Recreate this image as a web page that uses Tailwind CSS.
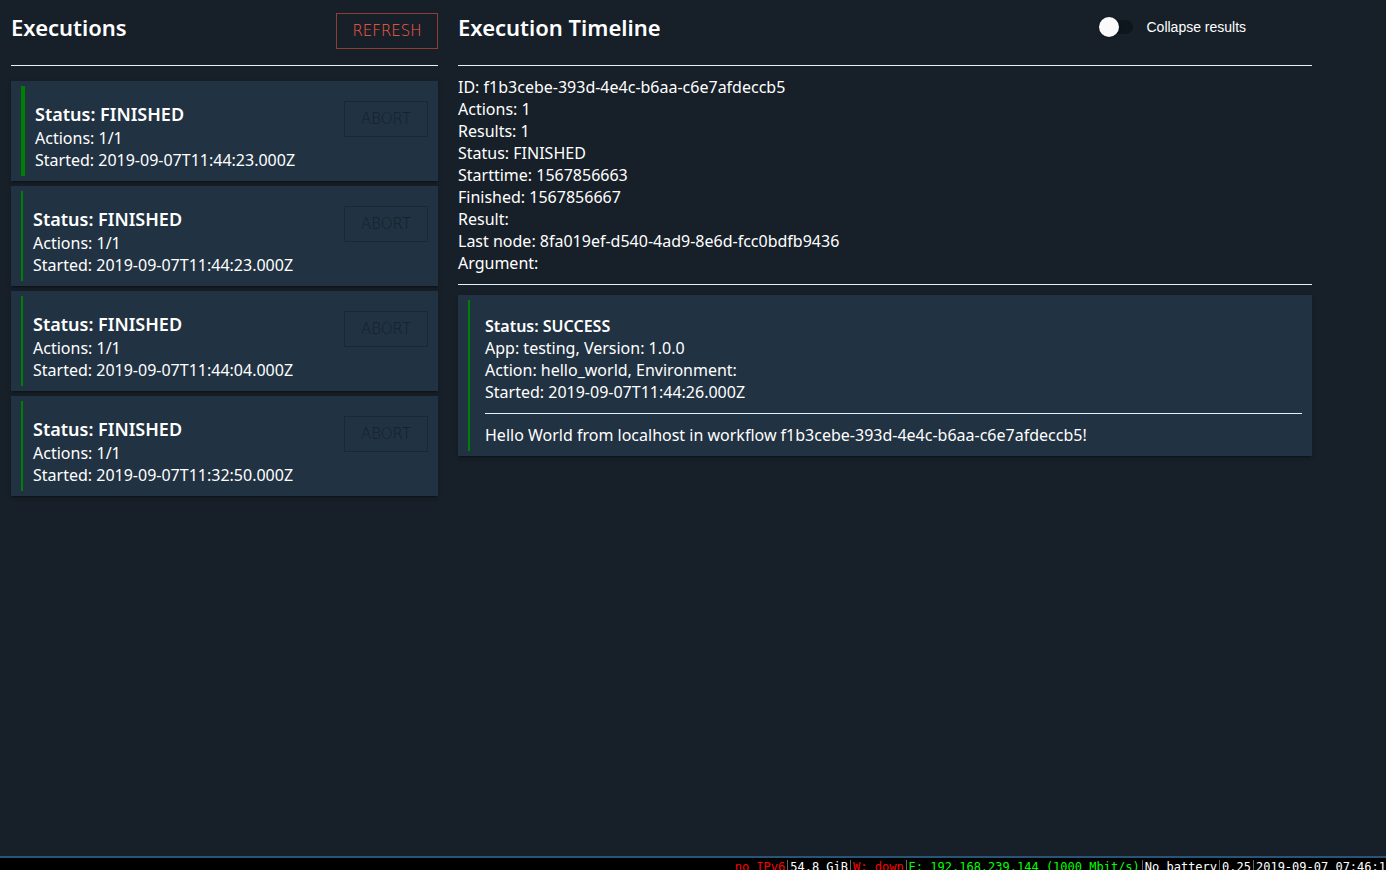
<!DOCTYPE html>
<html lang="en">
<head>
<meta charset="utf-8">
<meta name="viewport" content="width=device-width, initial-scale=1">
<title>Executions</title>
<script src="https://cdn.jsdelivr.net/npm/@tailwindcss/browser@4"></script>
</head>
<body class="flex h-screen flex-col overflow-hidden bg-[#172029] font-['Noto_Sans',sans-serif] text-base leading-[22px] text-white">
<main class="grid min-h-0 flex-1 grid-cols-[1fr_2fr] content-start gap-5 overflow-hidden pr-[74px] pl-[11px]">
  <section>
    <header class="flex items-start justify-between border-b border-[#e4f1fa] pt-[13px] pb-4">
      <h1 class="text-[22px] leading-7 font-semibold">Executions</h1>
      <button type="button" class="h-9 w-[102px] border border-[#903d35] font-['DejaVu_Sans',sans-serif] text-[15px] font-extralight text-[#ff5f45]">REFRESH</button>
    </header>
    <ul class="mt-[15px] flex flex-col gap-[5px]">
      <li class="bg-[#213242] px-2.5 py-[5px] shadow-[0_3px_1px_-2px_rgba(0,0,0,0.2),0_2px_2px_0_rgba(0,0,0,0.14),0_1px_5px_0_rgba(0,0,0,0.12)]">
        <div class="flex items-start justify-between border-l-4 border-[#008000] pt-[15px] pb-[5px] pl-2.5">
          <div><h2 class="text-[18px] leading-[26px] font-semibold">Status: FINISHED</h2><p>Actions: 1/1</p><p>Started: 2019-09-07T11:44:23.000Z</p></div>
          <button type="button" disabled class="h-9 w-[84px] border border-[#1a2735] font-['DejaVu_Sans',sans-serif] text-[15px] font-extralight text-[#14202c]">ABORT</button>
        </div>
      </li>
      <li class="bg-[#213242] px-2.5 py-[5px] shadow-[0_3px_1px_-2px_rgba(0,0,0,0.2),0_2px_2px_0_rgba(0,0,0,0.14),0_1px_5px_0_rgba(0,0,0,0.12)]">
        <div class="flex items-start justify-between border-l-2 border-[#008000] pt-[15px] pb-[5px] pl-2.5">
          <div><h2 class="text-[18px] leading-[26px] font-semibold">Status: FINISHED</h2><p>Actions: 1/1</p><p>Started: 2019-09-07T11:44:23.000Z</p></div>
          <button type="button" disabled class="h-9 w-[84px] border border-[#1a2735] font-['DejaVu_Sans',sans-serif] text-[15px] font-extralight text-[#14202c]">ABORT</button>
        </div>
      </li>
      <li class="bg-[#213242] px-2.5 py-[5px] shadow-[0_3px_1px_-2px_rgba(0,0,0,0.2),0_2px_2px_0_rgba(0,0,0,0.14),0_1px_5px_0_rgba(0,0,0,0.12)]">
        <div class="flex items-start justify-between border-l-2 border-[#008000] pt-[15px] pb-[5px] pl-2.5">
          <div><h2 class="text-[18px] leading-[26px] font-semibold">Status: FINISHED</h2><p>Actions: 1/1</p><p>Started: 2019-09-07T11:44:04.000Z</p></div>
          <button type="button" disabled class="h-9 w-[84px] border border-[#1a2735] font-['DejaVu_Sans',sans-serif] text-[15px] font-extralight text-[#14202c]">ABORT</button>
        </div>
      </li>
      <li class="bg-[#213242] px-2.5 py-[5px] shadow-[0_3px_1px_-2px_rgba(0,0,0,0.2),0_2px_2px_0_rgba(0,0,0,0.14),0_1px_5px_0_rgba(0,0,0,0.12)]">
        <div class="flex items-start justify-between border-l-2 border-[#008000] pt-[15px] pb-[5px] pl-2.5">
          <div><h2 class="text-[18px] leading-[26px] font-semibold">Status: FINISHED</h2><p>Actions: 1/1</p><p>Started: 2019-09-07T11:32:50.000Z</p></div>
          <button type="button" disabled class="h-9 w-[84px] border border-[#1a2735] font-['DejaVu_Sans',sans-serif] text-[15px] font-extralight text-[#14202c]">ABORT</button>
        </div>
      </li>
    </ul>
  </section>

  <section>
    <header class="grid grid-cols-[3fr_1fr] border-b border-[#e4f1fa] pt-[13px] pb-6">
      <h1 class="text-[22px] leading-7 font-semibold">Execution Timeline</h1>
      <div class="flex h-7 items-center gap-3.5">
        <input id="collapse" type="checkbox" role="switch" class="flex h-3.5 w-[34px] appearance-none items-center rounded-full bg-[#0e161d] before:size-5 before:shrink-0 before:rounded-full before:bg-[#fafafa] before:shadow-[0_1px_3px_rgba(0,0,0,0.4)] before:content-[''] checked:justify-end">
        <label for="collapse" class="font-['Liberation_Sans',sans-serif] text-[14px]">Collapse results</label>
      </div>
    </header>
    <div class="border-b border-[#e4f1fa] py-2.5">
      <p>ID: f1b3cebe-393d-4e4c-b6aa-c6e7afdeccb5</p>
      <p>Actions: 1</p>
      <p>Results: 1</p>
      <p>Status: FINISHED</p>
      <p>Starttime: 1567856663</p>
      <p>Finished: 1567856667</p>
      <p>Result:</p>
      <p>Last node: 8fa019ef-d540-4ad9-8e6d-fcc0bdfb9436</p>
      <p>Argument:</p>
    </div>
    <article class="mt-2.5 bg-[#213242] px-2.5 py-[5px] shadow-[0_3px_1px_-2px_rgba(0,0,0,0.2),0_2px_2px_0_rgba(0,0,0,0.14),0_1px_5px_0_rgba(0,0,0,0.12)]">
      <div class="border-l-2 border-[#008000] pt-[15px] pb-[5px] pl-[15px]">
        <h2 class="font-semibold">Status: SUCCESS</h2>
        <p>App: testing, Version: 1.0.0</p>
        <p>Action: hello_world, Environment:</p>
        <p>Started: 2019-09-07T11:44:26.000Z</p>
        <hr class="my-2.5 border-[#e4f1fa]">
        <p>Hello World from localhost in workflow f1b3cebe-393d-4e4c-b6aa-c6e7afdeccb5!</p>
      </div>
    </article>
  </section>
</main>

<footer class="flex h-3.5 shrink-0 justify-end overflow-hidden border-t-2 border-[#285577] bg-black pt-[2px] font-['DejaVu_Sans_Mono',monospace] text-[12px] leading-[14px] whitespace-pre text-white">
  <div class="flex h-[14px] shrink-0 divide-x divide-[#666666]">
    <span class="px-[2px] text-[#ff0000]">no IPv6</span>
    <span class="px-[2px]">54.8 GiB</span>
    <span class="px-[2px] text-[#ff0000]">W: down</span>
    <span class="px-[2px] text-[#00ff00]">E: 192.168.239.144 (1000 Mbit/s)</span>
    <span class="px-[2px]">No battery</span>
    <span class="px-[2px]">0.25</span>
    <span class="pl-[2px]">2019-09-07 07:46:1</span>
  </div>
</footer>
</body>
</html>
